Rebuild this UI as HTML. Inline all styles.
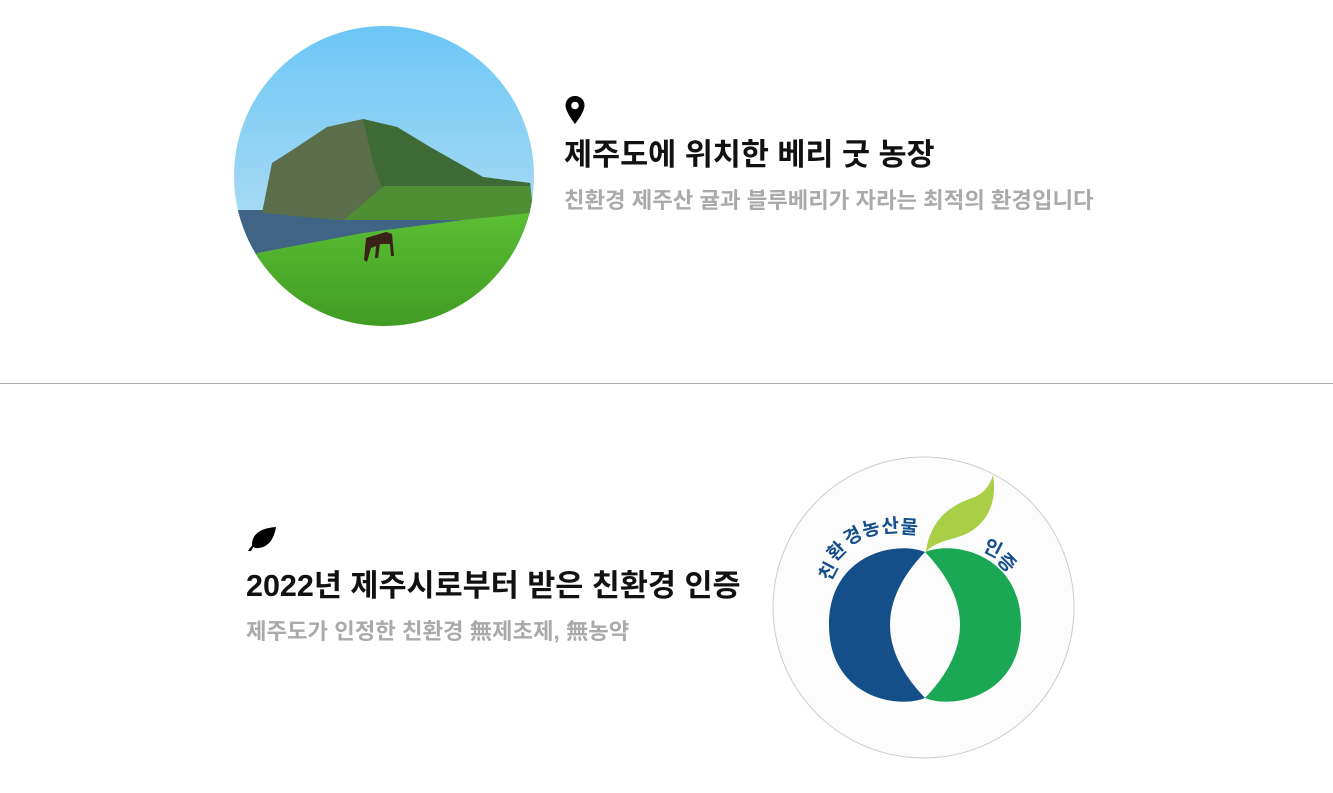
<!DOCTYPE html>
<html><head><meta charset="utf-8"><style>
body{margin:0;width:1333px;height:793px;background:#fff;position:relative;overflow:hidden;font-family:"Liberation Sans","Noto Sans CJK KR",sans-serif;}
.a{position:absolute;white-space:nowrap}
.t{font-size:30.5px;font-weight:bold;color:#111;letter-spacing:0}
.s{font-size:22.3px;font-weight:bold;color:#aaa;letter-spacing:0}
</style></head><body>
<svg class="a" style="left:234px;top:26px" width="300" height="300" viewBox="0 0 300 300">
<defs><clipPath id="c"><circle cx="150" cy="150" r="150"/></clipPath>
<linearGradient id="sky" x1="0" y1="0" x2="0" y2="1"><stop offset="0" stop-color="#6cc6f6"/><stop offset="1" stop-color="#c9e6f1"/></linearGradient>
<linearGradient id="g" x1="0" y1="0" x2="0" y2="1"><stop offset="0" stop-color="#5bbf34"/><stop offset="1" stop-color="#3f9a22"/></linearGradient></defs>
<g clip-path="url(#c)">
<rect width="300" height="300" fill="url(#sky)"/>
<rect y="184" width="300" height="50" fill="#3f6486"/>
<polygon points="28,187 38,137 63,121 93,101 129,93 163,101 196,121 249,151 296,157 300,194 103,194" fill="#5a6e4c"/>
<polygon points="129,93 163,101 196,121 249,151 296,157 300,194 160,194 140,140" fill="#3e6b35"/>
<polygon points="150,160 296,160 300,194 110,194" fill="#4f8f34"/>
<polygon points="23,227 129,207 229,194 296,187 306,304 0,304" fill="url(#g)"/>
<path d="M132 212 L152 206 L158 208 L160 230 L157 230 L156 218 L146 218 L144 232 L141 232 L142 220 L137 222 L133 236 L130 234 Z" fill="#3a2218"/>
</g></svg>
<svg class="a" style="left:564px;top:95px" width="22" height="30" viewBox="0 0 22 30"><path d="M11 1C5.5 1 1.5 5 1.5 10.5 1.5 17 11 29 11 29S20.5 17 20.5 10.5C20.5 5 16.5 1 11 1Z" fill="#000"/><circle cx="11" cy="10.5" r="3.8" fill="#fff"/></svg>
<div class="a t" style="left:564px;top:130px">제주도에 위치한 베리 굿 농장</div>
<div class="a s" style="left:564px;top:183px">친환경 제주산 귤과 블루베리가 자라는 최적의 환경입니다</div>
<div class="a" style="left:0;top:383px;width:1333px;height:1px;background:#aaa"></div>
<svg class="a" style="left:246px;top:525px" width="32" height="28" viewBox="0 0 32 28"><path d="M2 26C6 19 12 15 18 13 12 16 8 20 5 26ZM6 20C6 8 16 3 30 2 28 14 22 24 9 23Z" fill="#000"/></svg>
<div class="a t" style="left:246px;top:561px">2022년 제주시로부터 받은 친환경 인증</div>
<div class="a s" style="left:246px;top:614px">제주도가 인정한 친환경 無제초제, 無농약</div>
<svg class="a" style="left:772px;top:456px" width="303" height="303" viewBox="772 456 303 303">
<circle cx="923.5" cy="607.5" r="150.5" fill="#fcfcfc" stroke="#ccc" stroke-width="1"/>
<path d="M925 552C895 540 829 555 829 625C829 695 895 710 925 698Q855 625 925 552Z" fill="#154f8a"/>
<path d="M925 552C955 540 1021 555 1021 625C1021 695 955 710 925 698Q995 625 925 552Z" fill="#1ba854"/>
<path d="M926 552C930 520 950 505 975 497 985 492 990 485 993 475 998 505 985 530 955 538 940 542 932 545 926 552Z" fill="#a8cf45"/>
<g font-size="19" font-weight="bold" fill="#154f8a" font-family="Liberation Sans,Noto Sans CJK KR,sans-serif">
<text transform="translate(830,582) rotate(-62)">친</text>
<text transform="translate(835,562) rotate(-45)">환</text>
<text transform="translate(848,546) rotate(-28)">경</text>
<text transform="translate(864,537) rotate(-14)">농</text>
<text transform="translate(882,533) rotate(-4)">산</text>
<text transform="translate(900,533) rotate(4)">물</text>
<text transform="translate(982,550) rotate(28)">인</text>
<text transform="translate(996,561) rotate(45)">증</text>
</g>
</svg>
</body></html>
